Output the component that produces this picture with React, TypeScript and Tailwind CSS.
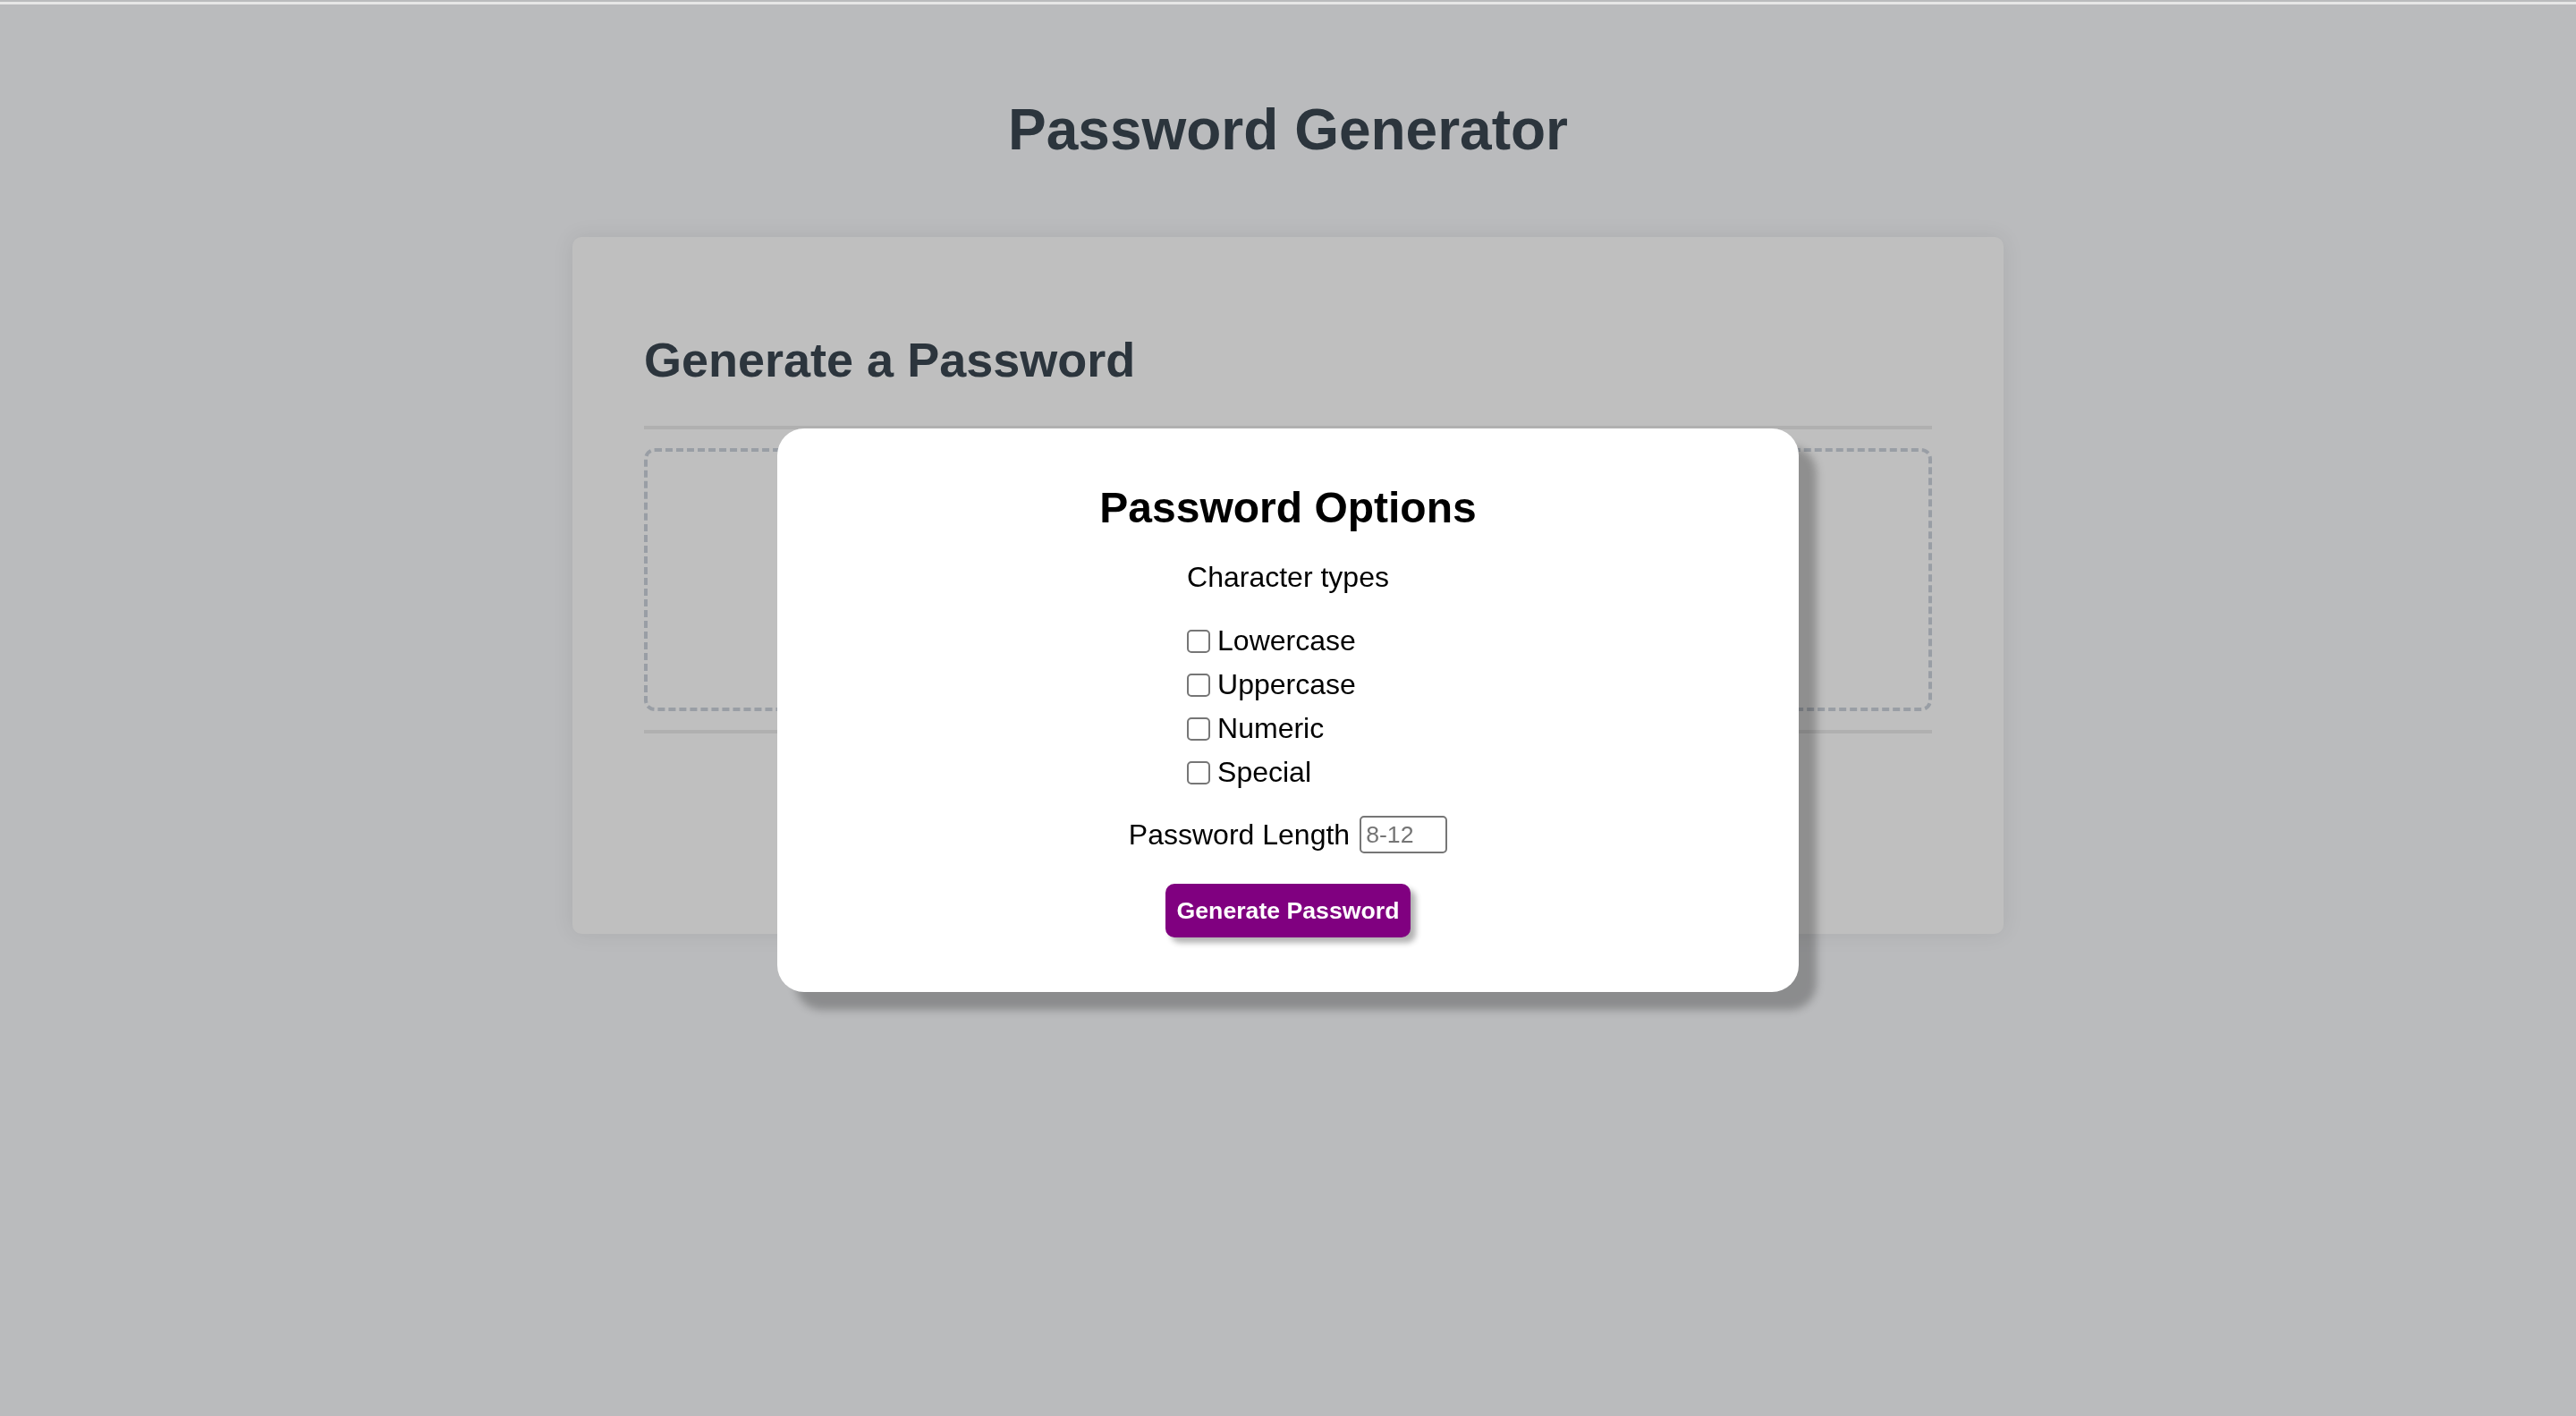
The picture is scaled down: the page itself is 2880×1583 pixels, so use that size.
import React from "react";

const font = { fontFamily: '"Liberation Sans", Arial, Helvetica, sans-serif' };

function Check({ label }: { label: string }) {
  return (
    <label className="flex items-center h-[49px] gap-[8px] text-[32px] leading-[49px] text-black">
      <input
        type="checkbox"
        className="appearance-none w-[26px] h-[26px] border-2 border-[#767676] rounded-[5px] bg-white m-0 shrink-0"
      />
      <span>{label}</span>
    </label>
  );
}

export default function App() {
  return (
    <div style={font} className="min-h-screen bg-[#babbbd] relative">
      <div className="h-[2px] bg-[#babbbd]" />
      <div className="h-[3px] bg-[#e6e6e6]" />
      <h1 className="pt-[103px] text-center text-[64px] leading-[74px] font-bold text-[#2c353d]">
        Password Generator
      </h1>
      <div className="mt-[83px] mx-auto w-[1600px] bg-[#bfbfbf] rounded-[10px] shadow-[0_0_24px_rgba(0,0,0,0.08)] px-[80px] pt-[105px] pb-[224px]">
        <h2 className="text-[54px] leading-[64px] font-bold text-[#2c353d]">Generate a Password</h2>
        <div className="mt-[42px] h-[4px] bg-[#b0b0b0]" />
        <div className="mt-[21px] h-[294px] border-4 border-dashed border-[#999ea5] rounded-[12px]" />
        <div className="mt-[21px] h-[4px] bg-[#b0b0b0]" />
      </div>

      <div className="fixed inset-0 pt-[5px] flex items-center justify-center">
        <div className="w-[1142px] h-[630px] bg-white rounded-[30px] shadow-[20px_20px_10px_rgba(0,0,0,0.25)] pt-[61px] flex flex-col items-center">
          <h2 className="text-[48px] leading-[56px] font-bold text-black">Password Options</h2>
          <div className="mt-[29px] inline-flex flex-col items-start">
            <div className="text-[32px] leading-[40px] text-black">Character types</div>
            <div className="mt-[27px] flex flex-col">
              <Check label="Lowercase" />
              <Check label="Uppercase" />
              <Check label="Numeric" />
              <Check label="Special" />
            </div>
          </div>
          <div className="mt-[23px] flex items-center h-[44px] gap-[11px]">
            <span className="text-[32px] leading-[44px] text-black">Password Length</span>
            <input
              type="text"
              placeholder="8-12"
              style={font}
              className="w-[98px] h-[42px] border-2 border-[#767676] rounded-[5px] px-[5px] text-[26.67px] text-black placeholder:text-[#757575] bg-white outline-none"
            />
          </div>
          <button
            style={font}
            className="mt-[33px] h-[60px] px-[13px] bg-[#800080] text-white font-bold text-[26.67px] leading-[60px] rounded-[10px] shadow-[6px_6px_6px_rgba(0,0,0,0.3)]"
          >
            Generate Password
          </button>
        </div>
      </div>
    </div>
  );
}
